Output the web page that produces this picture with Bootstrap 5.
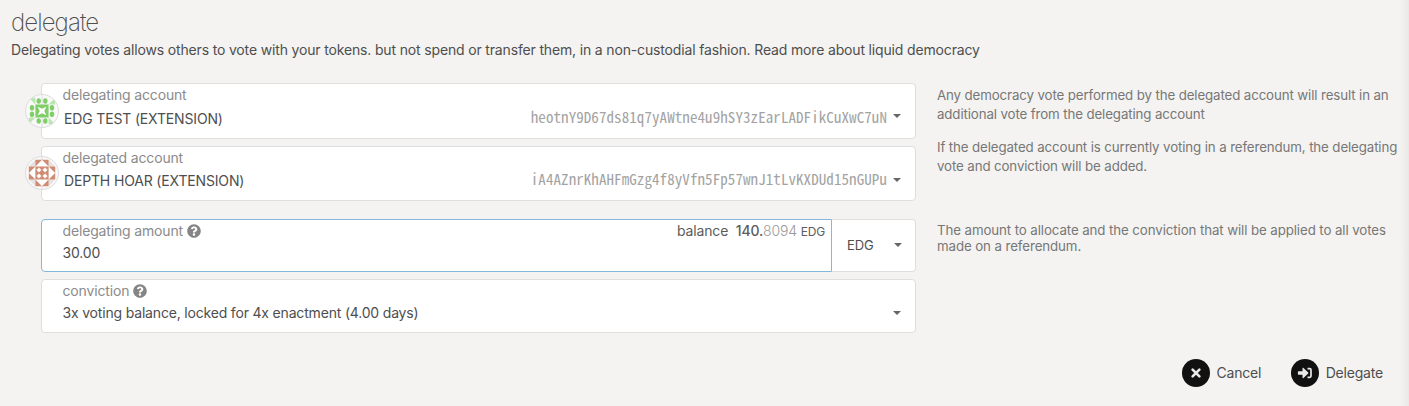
<!DOCTYPE html>
<html lang="en">
<head>
<meta charset="utf-8">
<title>delegate</title>
<link href="https://cdn.jsdelivr.net/npm/bootstrap@5.3.0/dist/css/bootstrap.min.css" rel="stylesheet">
<style>
body{background:#f4f3f1;font-family:Inter,"Liberation Sans",sans-serif;font-size:14px;line-height:18px;letter-spacing:-.158px;color:#4e4e4e;overflow:hidden}
.page{height:406px;padding:9px 0 0 11px;background:linear-gradient(to left,#e9e8e6,#f4f3f1 9px)}
h1{font-size:24px;font-weight:200;line-height:28px;letter-spacing:-.9px}
.intro{margin:4px 0 24px}
.form-col{width:905px;padding-left:30px;flex:none}
.hint{width:488px;padding-left:21px;color:#777;font-size:13.3px;letter-spacing:-.12px;line-height:19px}
.hint p{margin-bottom:14px}
.hint.tight{line-height:16px;padding-top:3px;letter-spacing:-.1px}
.field-box{background:#fff;border:1px solid #dededf;border-radius:4px;padding:2px 14px 0 20.5px;margin-bottom:7px}
.h-a{height:56px}.h-b{height:55px}.h-c{height:53px}.h-d{height:54px}
.caption-text{color:#8b8b8b}
.account-name{padding:7px 0 5px 1.5px;line-height:16px}
.h-b .account-name{padding:7px 0 5px 1.5px}
.address{font-family:"Noto Sans Mono CJK SC","DejaVu Sans Mono",monospace;font-size:15px;letter-spacing:.08px;line-height:16px;color:#a3a3a3;margin-right:6px;padding-bottom:2px}
.account-row{height:26px;margin-top:1px}
.h-b .account-row{margin-top:0}
.caret{width:0;height:0;border:4.5px solid transparent;border-top-color:#666;border-bottom:0}
.avatar{left:-17px;top:10px}
.h-b .avatar{top:9px}
.amount{border-color:#85b7d9;border-radius:4px 0 0 4px;padding-right:6px}
.unit{width:84px;border-left:0;border-radius:0 4px 4px 0;padding:0 13.5px 2px 15px;font-size:13px}
.balance-text{color:#5c5c5c}
.balance-text small{font-size:12px}
.conviction-text{letter-spacing:-.18px}
.actions{gap:30px;margin-top:19px;padding-right:26px}
.action{gap:6.5px;color:#4e4e4e;letter-spacing:-.2px;line-height:18px}
.action span{padding-bottom:1px}
</style>
</head>
<body>
<main class="page">
<h1 class="mb-0">delegate</h1>
<p class="intro">Delegating votes allows others to vote with your tokens. but not spend or transfer them, in a non-custodial fashion. Read more about liquid democracy</p>

<section class="d-flex">
  <div class="form-col">
    <div class="field-box h-a position-relative">
      <svg class="avatar position-absolute" width="34" height="34" viewBox="-17 -17 34 34">
        <defs><clipPath id="disc"><circle r="16.3"/></clipPath></defs>
        <circle r="16.5" fill="#f9f9f9" stroke="#dcdcdc"/>
        <path d="M0-17V17" stroke="#dedede"/>
        <g clip-path="url(#disc)">
          <g fill="#b9e8ae"><path d="M-13.2-13.2h6.6v6.6z"/><path d="M-13.2-13.2h6.6v6.6z" transform="rotate(90)"/><path d="M-13.2-13.2h6.6v6.6z" transform="rotate(180)"/><path d="M-13.2-13.2h6.6v6.6z" transform="rotate(270)"/></g>
          <g fill="#7fce68">
            <path d="M-6.6-6.6H6.6V6.6H-6.6z"/>
            <ellipse cx="-3.3" cy="-10" rx="2.2" ry="2.8"/><ellipse cx="3.3" cy="-10" rx="2.2" ry="2.8"/><ellipse cx="-3.3" cy="10" rx="2.2" ry="2.8"/><ellipse cx="3.3" cy="10" rx="2.2" ry="2.8"/><ellipse cx="-10" cy="-3.3" rx="2.2" ry="2.8"/><ellipse cx="-10" cy="3.3" rx="2.2" ry="2.8"/><ellipse cx="10" cy="-3.3" rx="2.2" ry="2.8"/><ellipse cx="10" cy="3.3" rx="2.2" ry="2.8"/>
          </g>
          <path d="M-4.3-4.3L0-2.3 4.3-4.3 2.3 0 4.3 4.3 0 2.3-4.3 4.3-2.3 0z" fill="#fff"/>
        </g>
      </svg>
      <div class="caption-text">delegating account</div>
      <div class="account-row d-flex align-items-center">
        <span class="account-name me-auto">EDG TEST (EXTENSION)</span>
        <span class="address">heotnY9D67ds81q7yAWtne4u9hSY3zEarLADFikCuXwC7uN</span><i class="caret mb-1"></i>
      </div>
    </div>
    <div class="field-box h-b position-relative">
      <svg class="avatar position-absolute" width="34" height="34" viewBox="-17 -17 34 34">
        <circle r="16.5" fill="#f9f9f9" stroke="#dcdcdc"/>
        <path d="M0-17V17" stroke="#dedede"/>
        <g clip-path="url(#disc)">
          <path d="M-13.2-6.6l6.6-6.6v6.6zM13.2-6.6l-6.6-6.6v6.6zM-13.2 6.6l6.6 6.6V6.6zM13.2 6.6l-6.6 6.6V6.6z" fill="#e3e3e3"/>
          <path d="M-6.6-6.6L0-13.2 6.6-6.6zM-6.6 6.6L0 13.2 6.6 6.6zM-6.6-6.6L-13.2 0-6.6 6.6zM6.6-6.6L13.2 0 6.6 6.6z" fill="#fff"/>
          <g fill="#d28b73">
            <path d="M-6.6-6.6H6.6V6.6H-6.6z"/>
            <path d="M-6.6-13.2H0L-6.6-6.6zM6.6-13.2H0L6.6-6.6zM-6.6 13.2H0L-6.6 6.6zM6.6 13.2H0L6.6 6.6zM-13.2-6.6V0L-6.6-6.6zM-13.2 6.6V0L-6.6 6.6zM13.2-6.6V0L6.6-6.6zM13.2 6.6V0L6.6 6.6z"/>
          </g>
          <path d="M-3-5.3L-.8-3-3-.8-5.3-3zM3-5.3L5.3-3 3-.8.8-3zM-3 .8L-.8 3-3 5.3-5.3 3zM3 .8L5.3 3 3 5.3.8 3z" fill="#fff" stroke="#fff" stroke-width=".5"/>
        </g>
      </svg>
      <div class="caption-text">delegated account</div>
      <div class="account-row d-flex align-items-center">
        <span class="account-name me-auto">DEPTH HOAR (EXTENSION)</span>
        <span class="address">iA4AZnrKhAHFmGzg4f8yVfn5Fp57wnJ1tLvKXDUd15nGUPu</span><i class="caret"></i>
      </div>
    </div>
  </div>
  <aside class="hint" style="padding-top:3px">
    <p>Any democracy vote performed by the delegated account will result in an<br>additional vote from the delegating account</p>
    <p class="mb-0">If the delegated account is currently voting in a referendum, the delegating<br>vote and conviction will be added.</p>
  </aside>
</section>

<section class="d-flex" style="margin-top:11px">
  <div class="form-col">
    <div class="d-flex">
      <div class="field-box amount h-c flex-grow-1">
        <div class="d-flex caption-text align-items-start">
          <span class="me-1">delegating amount</span>
          <svg style="margin-top:2px" width="14" height="14" viewBox="0 0 512 512" fill="#858585"><path d="M504 256c0 137-111 248-248 248S8 393 8 256 119 8 256 8s248 111 248 248zM262.700 90c-54.500 0-89.300 23-116.500 63.800-3.500 5.300-2.400 12.400 2.700 16.300l34.700 26.300c5.200 3.900 12.600 3 16.700-2.100 17.900-22.700 30.100-35.800 57.300-35.800 20.400 0 45.700 13.100 45.700 33 0 15-12.400 22.700-32.500 34C247.100 238.500 216 254.900 216 296v4c0 6.600 5.400 12 12 12h56c6.600 0 12-5.400 12-12v-1.300c0-28.500 83.200-29.600 83.200-106.700 0-58-60.200-102-116.500-102zM256 338c-25.400 0-46 20.600-46 46s20.600 46 46 46 46-20.600 46-46-20.600-46-46-46z"/></svg>
          <span class="ms-auto balance-text" style="height:18px">balance&nbsp; <span style="font-weight:500">140.</span><span class="fw-light" style="color:#999">8094</span> <small>EDG</small></span>
        </div>
        <div style="margin-top:4px">30.00</div>
      </div>
      <div class="field-box unit h-c d-flex align-items-center justify-content-between"><span>EDG</span><i class="caret"></i></div>
    </div>
    <div class="field-box h-d">
      <div class="d-flex caption-text align-items-center">
        <span class="me-1">conviction</span>
        <svg width="14" height="14" viewBox="0 0 512 512" fill="#858585"><path d="M504 256c0 137-111 248-248 248S8 393 8 256 119 8 256 8s248 111 248 248zM262.700 90c-54.500 0-89.300 23-116.500 63.800-3.500 5.300-2.400 12.400 2.700 16.300l34.700 26.300c5.200 3.900 12.600 3 16.700-2.100 17.900-22.700 30.100-35.800 57.300-35.800 20.400 0 45.700 13.100 45.700 33 0 15-12.400 22.700-32.500 34C247.100 238.500 216 254.900 216 296v4c0 6.600 5.400 12 12 12h56c6.600 0 12-5.400 12-12v-1.300c0-28.500 83.200-29.600 83.200-106.700 0-58-60.200-102-116.500-102zM256 338c-25.400 0-46 20.600-46 46s20.600 46 46 46 46-20.600 46-46-20.600-46-46-46z"/></svg>
      </div>
      <div class="d-flex align-items-center justify-content-between" style="margin-top:4px"><span class="conviction-text">3x voting balance, locked for 4x enactment (4.00 days)</span><i class="caret"></i></div>
    </div>
  </div>
  <aside class="hint tight"><p class="mb-0">The amount to allocate and the conviction that will be applied to all votes<br>made on a referendum.</p></aside>
</section>

<footer class="actions d-flex justify-content-end">
  <button class="action btn p-0 border-0 d-flex align-items-center" style="font-size:14px">
    <svg width="28" height="28" viewBox="0 0 28 28"><circle cx="14" cy="14" r="14" fill="#111"/><path d="M10.600 10.600l6.800 6.800M17.400 10.600l-6.800 6.800" stroke="#e9e9e9" stroke-width="2.600" stroke-linecap="round"/></svg><span>Cancel</span>
  </button>
  <button class="action btn p-0 border-0 d-flex align-items-center" style="font-size:14px">
    <svg width="28" height="28" viewBox="0 0 28 28"><circle cx="14" cy="14" r="14" fill="#111"/><path d="M7.500 12.300h4V9.400c0-.5.600-.8 1-.4l4.700 4.500c.3.300.3.700 0 1l-4.700 4.500c-.4.400-1 .1-1-.4v-2.900h-4c-.4 0-.6-.3-.6-.7v-2c0-.4.200-.7.600-.7z" fill="#e9e9e9"/><path d="M16.500 9.700h2.200c.8 0 1.300.5 1.300 1.300v6c0 .8-.5 1.300-1.300 1.300h-2.200" fill="none" stroke="#e9e9e9" stroke-width="1.700"/></svg><span>Delegate</span>
  </button>
</footer>
</main>
<script src="https://cdn.jsdelivr.net/npm/bootstrap@5.3.0/dist/js/bootstrap.bundle.min.js"></script>
</body>
</html>
